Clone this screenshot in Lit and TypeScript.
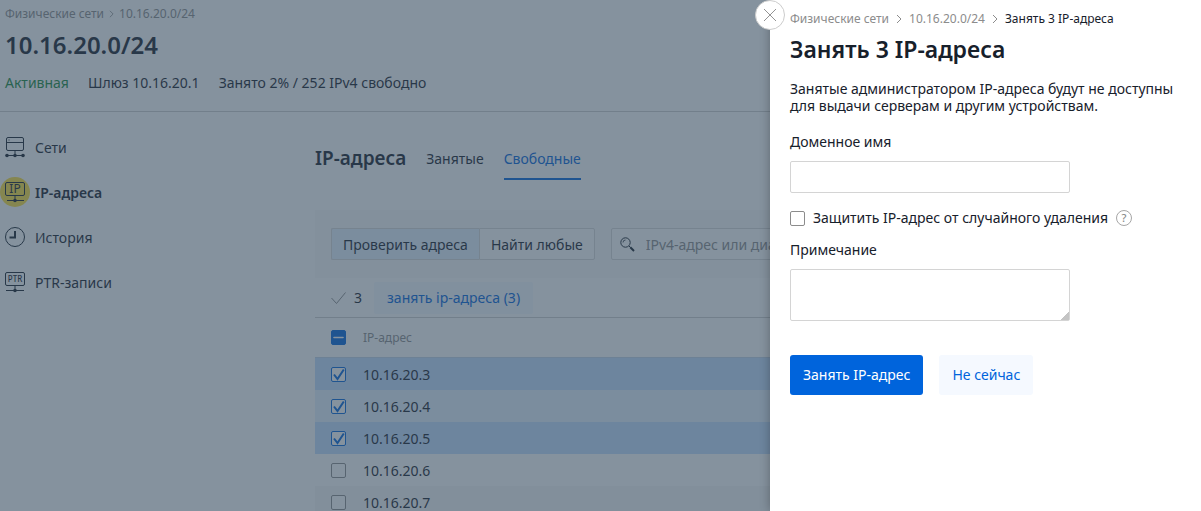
import { LitElement, html, css, svg, nothing } from "lit";
import { customElement, property, state } from "lit/decorators.js";
import { classMap } from "lit/directives/class-map.js";

const base = css`
  * {
    box-sizing: border-box;
  }
  a {
    color: inherit;
    text-decoration: none;
  }
  button,
  input,
  textarea {
    font: inherit;
    color: inherit;
    margin: 0;
  }
  button {
    cursor: pointer;
  }
  h1,
  h2,
  p {
    margin: 0;
  }
  .check {
    appearance: none;
    display: block;
    flex: none;
    width: 15px;
    height: 15px;
    border: 1px solid #8c8c8c;
    border-radius: 2px;
    background: #fff center / 13px 13px no-repeat;
  }
  .check:checked {
    border-color: #0064dc;
    background-image: url("data:image/svg+xml,%3Csvg xmlns='http://www.w3.org/2000/svg' viewBox='0 0 13 13'%3E%3Cpath d='M2 6.5 5.5 11 11.8 1.5' fill='none' stroke='%230064dc' stroke-width='2'/%3E%3C/svg%3E");
  }
  .check:indeterminate {
    border-color: #0064dc;
    background-color: #0064dc;
    background-image: url("data:image/svg+xml,%3Csvg xmlns='http://www.w3.org/2000/svg' viewBox='0 0 13 13'%3E%3Cpath d='M2 6.5H11' fill='none' stroke='%23fff' stroke-width='1.6' stroke-linecap='round'/%3E%3C/svg%3E");
  }
`;

const icons: Record<string, unknown> = {
  nets: svg`<rect x="6.500" y="5.500" width="17" height="13" rx="1.500"/><path d="M6.500 10.500H23.500M6 23.500H24M15 19V23"/><path d="M8.500 8H9.500"/><g fill="currentColor" stroke="none"><circle cx="7" cy="23.500" r="1.800"/><circle cx="15" cy="23.500" r="1.800"/><circle cx="23" cy="23.500" r="1.800"/></g>`,
  ip: svg`<rect x="5.500" y="5.500" width="19" height="13" rx="1.500"/><path d="M7 23.500H24M15 19V23"/><circle cx="15" cy="23.500" r="1.800" fill="currentColor" stroke="none"/><text x="15" y="16" class="ip">IP</text>`,
  history: svg`<circle cx="15" cy="15" r="9.500"/><path d="M15 9V15.500H9.500" stroke-width="2"/>`,
  ptr: svg`<rect x="5.500" y="5.500" width="19" height="13" rx="1.500"/><path d="M6 23.500H24M15 19V23"/><circle cx="15" cy="23.500" r="1.800" fill="currentColor" stroke="none"/><text x="15" y="15" class="ptr">PTR</text>`,
};

const chevron = html`<svg class="chevron" viewBox="0 0 6 10" aria-hidden="true">
  <path d="M1 1 5 5 1 9" fill="none" stroke="currentColor" />
</svg>`;

@customElement("side-nav")
class SideNav extends LitElement {
  static styles = [
    base,
    css`
      :host {
        display: block;
      }
      .nav {
        display: grid;
        gap: 15px;
      }
      .item {
        display: flex;
        align-items: center;
        gap: 5px;
        height: 30px;
      }
      .item span {
        padding-top: 2px;
      }
      .active {
        font-weight: 600;
      }
      .icon {
        flex: none;
        width: 30px;
        height: 30px;
        border-radius: 50%;
        fill: none;
        stroke: currentColor;
      }
      .active .icon {
        background: #ffe13c;
      }
      text {
        fill: currentColor;
        stroke: none;
        text-anchor: middle;
        font-weight: 400;
      }
      .ip {
        font-size: 12px;
      }
      .ptr {
        font-size: 8px;
        font-weight: 500;
      }
    `,
  ];

  items = [
    { icon: "nets", label: "Сети" },
    { icon: "ip", label: "IP-адреса" },
    { icon: "history", label: "История" },
    { icon: "ptr", label: "PTR-записи" },
  ];

  @property() current = "ip";

  render() {
    return html`<nav class="nav">
      ${this.items.map(
        (i) => html`<a href="#${i.icon}" class=${classMap({ item: true, active: i.icon === this.current })}>
          <svg class="icon" viewBox="0 0 30 30" aria-hidden="true">${icons[i.icon]}</svg>
          <span>${i.label}</span>
        </a>`
      )}
    </nav>`;
  }
}

@customElement("address-list")
class AddressList extends LitElement {
  static styles = [
    base,
    css`
      :host {
        display: block;
        min-width: 0;
      }
      .head {
        display: flex;
        align-items: center;
        gap: 20px;
        height: 42px;
      }
      .title {
        font-size: 19px;
        font-weight: 600;
        padding-bottom: 3px;
      }
      .tab {
        height: 42px;
        line-height: 42px;
        border-bottom: 2px solid transparent;
      }
      .tab.on {
        color: #0064dc;
        border-color: #0064dc;
      }
      .filter {
        display: flex;
        gap: 16px;
        height: 68px;
        margin-top: 30px;
        padding: 18px 16px;
        background: #fafafa;
      }
      .segments {
        display: flex;
      }
      .segment {
        height: 32px;
        padding: 2px 11px 0;
        border: 1px solid #d9d9d9;
        border-radius: 0 2px 2px 0;
        background: #fff;
        white-space: nowrap;
      }
      .segment.on {
        border-radius: 2px 0 0 2px;
        border-right-width: 0;
        background: #e6f2ff;
      }
      .search {
        display: flex;
        align-items: center;
        gap: 11px;
        flex: 1;
        height: 32px;
        padding: 0 8px;
        border: 1px solid #d9d9d9;
        border-radius: 2px;
        background: #fff;
      }
      .search svg {
        flex: none;
        width: 15px;
        height: 15px;
      }
      .query {
        flex: 1;
        min-width: 0;
        border: 0;
        padding: 2px 0 0;
        background: none;
        outline: none;
      }
      .query::placeholder {
        color: #8c8c8c;
        opacity: 1;
      }
      .bulk {
        display: flex;
        align-items: center;
        height: 40px;
        padding: 0 16px;
        border-bottom: 1px solid #d0d0d0;
      }
      .tick {
        width: 15px;
        height: 15px;
        margin-right: 8px;
        color: #8c8c8c;
      }
      .take {
        height: 32px;
        margin-left: 12px;
        padding: 0 13px;
        border: 0;
        border-radius: 2px;
        background: #f5f9ff;
        color: #0064dc;
      }
      .table {
        width: 100%;
        border-spacing: 0;
        text-align: left;
      }
      th,
      td {
        height: 32px;
        padding: 0;
      }
      td {
        padding-top: 2px;
      }
      thead th {
        height: 40px;
        border-bottom: 1px solid #c3d4e8;
        font-size: 12px;
        font-weight: 400;
        color: #8c8c8c;
      }
      .pick {
        width: 48px;
        padding: 0 0 0 16px;
      }
      tbody tr:nth-child(even) {
        background: #fff;
      }
      tbody tr:nth-child(odd) {
        background: #f7f7f7;
      }
      tbody tr.on:nth-child(odd) {
        background: #c3deff;
      }
      tbody tr.on:nth-child(even) {
        background: #e6f2ff;
      }
    `,
  ];

  @state() rows = [3, 4, 5, 6, 7].map((n) => ({ ip: `10.16.20.${n}`, on: n < 6 }));

  toggle(index: number) {
    this.rows = this.rows.map((r, i) => (i === index ? { ...r, on: !r.on } : r));
  }

  toggleAll(e: Event) {
    const on = (e.target as HTMLInputElement).checked;
    this.rows = this.rows.map((r) => ({ ...r, on }));
  }

  render() {
    const count = this.rows.filter((r) => r.on).length;
    return html`
      <div class="head">
        <h2 class="title">IP-адреса</h2>
        <a class="tab" href="#taken">Занятые</a>
        <a class="tab on" href="#free">Свободные</a>
      </div>
      <div class="filter">
        <div class="segments">
          <button class="segment on">Проверить адреса</button>
          <button class="segment">Найти любые</button>
        </div>
        <label class="search">
          <svg viewBox="0 0 15 15" fill="none" stroke="currentColor" aria-hidden="true">
            <circle cx="5.500" cy="5.500" r="4.700" />
            <path d="M3 5.500A2.500 2.500 0 0 1 5.500 3" stroke-width=".8" />
            <path d="M9 9 10.500 10.500" />
            <path d="M10.300 10.300 14 14" stroke-width="2" />
          </svg>
          <input class="query" aria-label="Поиск" placeholder="IPv4-адрес или диапазон" />
        </label>
      </div>
      <div class="bulk">
        <svg class="tick" viewBox="0 0 15 15" aria-hidden="true">
          <path d="M.5 8 5.500 13.500 14.500 2.500" fill="none" stroke="currentColor" />
        </svg>
        <span>${count}</span>
        <button class="take">занять ip-адреса (${count})</button>
      </div>
      <table class="table">
        <thead>
          <tr>
            <th class="pick">
              <input
                class="check"
                type="checkbox"
                aria-label="Все адреса"
                .indeterminate=${count > 0 && count < this.rows.length}
                .checked=${count === this.rows.length}
                @change=${this.toggleAll}
              />
            </th>
            <th>IP-адрес</th>
          </tr>
        </thead>
        <tbody>
          ${this.rows.map(
            (r, i) => html`<tr class=${r.on ? "on" : nothing}>
              <td class="pick">
                <input
                  class="check"
                  type="checkbox"
                  aria-label=${r.ip}
                  .checked=${r.on}
                  @change=${() => this.toggle(i)}
                />
              </td>
              <td>${r.ip}</td>
            </tr>`
          )}
        </tbody>
      </table>
    `;
  }
}

@customElement("reserve-drawer")
class ReserveDrawer extends LitElement {
  static styles = [
    base,
    css`
      :host {
        display: block;
        padding: 10px 20px 20px;
        background: #fff;
        box-shadow: 0 0 10px rgba(0, 0, 0, 0.3);
      }
      .close {
        position: absolute;
        top: 0;
        left: -15px;
        display: grid;
        place-items: center;
        width: 30px;
        height: 30px;
        padding: 0;
        border: 1px solid #ccc;
        border-radius: 50%;
        background: #fff;
        color: #777;
      }
      .close svg {
        width: 14px;
        height: 14px;
      }
      .crumbs {
        display: flex;
        align-items: center;
        gap: 7px;
        font-size: 12px;
        line-height: 18px;
        white-space: nowrap;
      }
      .muted {
        color: #8c8c8c;
      }
      .chevron {
        width: 6px;
        height: 10px;
        color: #8c8c8c;
      }
      .title {
        margin-top: 5px;
        font-size: 23px;
        font-weight: 600;
        line-height: 32px;
      }
      .lead {
        margin-top: 15px;
        line-height: 17px;
      }
      .form {
        display: grid;
        justify-items: start;
        margin-top: 19px;
      }
      .label {
        margin-bottom: 10px;
        line-height: 18px;
      }
      .field {
        width: 280px;
        max-width: 100%;
        height: 32px;
        padding: 6px 8px;
        border: 1px solid #d4d4d4;
        border-radius: 2px;
        background: #fff;
      }
      .note {
        display: block;
        height: 52px;
        resize: both;
      }
      .note::-webkit-resizer {
        background: linear-gradient(135deg, transparent 70%, #c4c4c4 70%);
      }
      .protect {
        display: flex;
        align-items: center;
        gap: 8px;
        height: 18px;
        margin: 16px 0 14px;
        white-space: nowrap;
      }
      .help {
        width: 16px;
        height: 16px;
        padding: 0;
        border: 1px solid #a6a6a6;
        border-radius: 50%;
        background: none;
        color: #8c8c8c;
        font-size: 11px;
        font-weight: 500;
        line-height: 14px;
      }
      .actions {
        display: flex;
        gap: 16px;
        margin-top: 34px;
      }
      .btn {
        height: 40px;
        padding: 0 13px;
        border: 0;
        border-radius: 3px;
        background: #f5f9ff;
        color: #0064dc;
      }
      .primary {
        background: #0064dc;
        color: #fff;
      }
    `,
  ];

  render() {
    return html`
      <button class="close" aria-label="Закрыть">
        <svg viewBox="0 0 14 14" aria-hidden="true">
          <path d="M1 1 13 13M13 1 1 13" fill="none" stroke="currentColor" stroke-width=".8" />
        </svg>
      </button>
      <nav class="crumbs">
        <a class="muted" href="#nets">Физические сети</a>${chevron}
        <a class="muted" href="#net">10.16.20.0/24</a>${chevron}
        <span>Занять 3 IP-адреса</span>
      </nav>
      <h1 class="title">Занять 3 IP-адреса</h1>
      <p class="lead">
        Занятые администратором IP-адреса будут не доступны для выдачи серверам и другим устройствам.
      </p>
      <form class="form" @submit=${(e: Event) => e.preventDefault()}>
        <label class="label" for="domain">Доменное имя</label>
        <input class="field" id="domain" type="text" />
        <div class="protect">
          <input class="check" id="protect" type="checkbox" />
          <label for="protect">Защитить IP-адрес от случайного удаления</label>
          <button class="help" type="button">?</button>
        </div>
        <label class="label" for="note">Примечание</label>
        <textarea class="field note" id="note"></textarea>
        <div class="actions">
          <button class="btn primary" type="submit">Занять IP-адрес</button>
          <button class="btn" type="button">Не сейчас</button>
        </div>
      </form>
    `;
  }
}

@customElement("app-root")
class AppRoot extends LitElement {
  static styles = [
    base,
    css`
      :host {
        display: block;
        position: relative;
        height: 100vh;
        overflow: hidden;
        background: #fff;
        color: #17202b;
        font-family: "Noto Sans", sans-serif;
        font-size: 14px;
        line-height: 18px;
      }
      .header {
        padding: 5px 5px 19px;
        border-bottom: 1px solid #d0d0d0;
      }
      .crumbs {
        display: flex;
        align-items: center;
        gap: 5px;
        color: #8c8c8c;
        font-size: 12px;
        line-height: 17px;
      }
      .chevron {
        width: 5px;
        height: 8px;
      }
      .title {
        margin-top: 7px;
        font-size: 24px;
        font-weight: 600;
        line-height: 32px;
      }
      .facts {
        display: flex;
        gap: 19px;
        margin-top: 12px;
        line-height: 19px;
      }
      .live {
        color: #178a3c;
      }
      .body {
        display: grid;
        grid-template-columns: 315px minmax(0, 1fr);
      }
      .side {
        padding-top: 20px;
      }
      .main {
        padding-top: 26px;
      }
      .shade {
        position: absolute;
        inset: 0;
        background: rgba(52, 73, 94, 0.6);
      }
      .drawer {
        position: absolute;
        inset: 0 0 0 auto;
        width: 431px;
      }
    `,
  ];

  render() {
    return html`
      <header class="header">
        <nav class="crumbs">
          <a href="#nets">Физические сети</a>${chevron}<a href="#net">10.16.20.0/24</a>
        </nav>
        <h1 class="title">10.16.20.0/24</h1>
        <div class="facts">
          <span class="live">Активная</span>
          <span>Шлюз 10.16.20.1</span>
          <span>Занято 2% / 252 IPv4 свободно</span>
        </div>
      </header>
      <div class="body">
        <side-nav class="side"></side-nav>
        <address-list class="main"></address-list>
      </div>
      <div class="shade"></div>
      <reserve-drawer class="drawer"></reserve-drawer>
    `;
  }
}
